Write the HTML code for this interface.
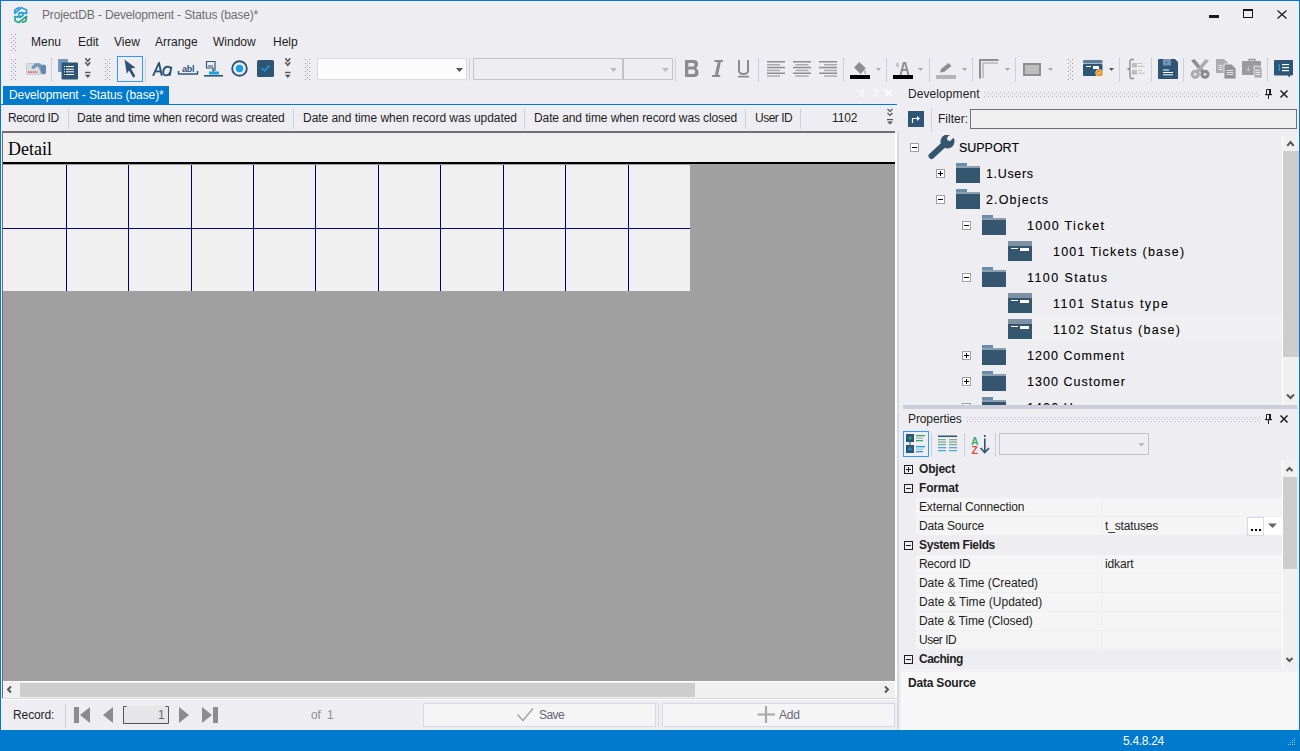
<!DOCTYPE html>
<html><head><meta charset="utf-8"><style>
*{box-sizing:border-box;margin:0;padding:0}
html,body{width:1300px;height:751px;overflow:hidden;background:#EEEEF2;font-family:"Liberation Sans",sans-serif;font-size:12px;color:#1E1E1E}
.a{position:absolute}
#root{position:relative;width:1300px;height:751px;overflow:hidden;background:#EEEEF2}
.t{position:absolute;white-space:pre;line-height:14px}
.tr{position:absolute;white-space:pre;line-height:14px;font-size:12.5px;color:#000;-webkit-text-stroke:0.1px #000}
.b{font-weight:bold}
</style></head><body><div id="root">
<svg class="a" style="left:0;top:0" width="1300" height="100" viewBox="0 0 1300 100" shape-rendering="auto">
<defs>
<pattern id="gp" x="0" y="0" width="4" height="4" patternUnits="userSpaceOnUse"><rect x="0" y="0" width="1" height="1" fill="#9A9A9A"/><rect x="2" y="2" width="1" height="1" fill="#9A9A9A"/></pattern>
<pattern id="gp2" x="1" y="1" width="4" height="4" patternUnits="userSpaceOnUse"><rect x="0" y="0" width="1" height="1" fill="#9A9A9A"/><rect x="2" y="2" width="1" height="1" fill="#9A9A9A"/></pattern>
</defs>
<!-- app icon -->
<g fill="none" stroke-width="1.7" stroke-linejoin="round" stroke-linecap="round">
<path d="M14.8 13.3 L14.8 9.9 L19.2 7.6 M14.8 13.3 L21.6 7.7 L26.6 10 L26.6 13.3 L21 12.6" stroke="#2A9FDB"/>
<path d="M18.8 13.4 L21 12.5 L22.9 13.7 L22.9 15.6 L20.9 16.8 L18.8 15.8 Z" stroke="#25A3BE"/>
<path d="M14.6 16.6 L20.5 17.2" stroke="#25A3BE"/>
<path d="M14.8 16.8 L15.3 20.9 L18.8 22.5 L26.4 16.5" stroke="#28A79A"/>
<path d="M22.4 22.3 L25.8 21.2 L26.4 16.6" stroke="#2EA36E"/>
</g>
<!-- title buttons -->
<rect x="1209" y="15" width="10" height="3" fill="#1A1A1A"/>
<rect x="1243.5" y="9.5" width="9" height="8" fill="none" stroke="#1A1A1A" stroke-width="1"/>
<rect x="1243" y="9" width="10" height="2" fill="#1A1A1A"/>
<path d="M1277.5 10.5 L1286.5 18.5 M1286.5 10.5 L1277.5 18.5" stroke="#1A1A1A" stroke-width="1.2"/>
<!-- grips -->
<rect x="11" y="34" width="1" height="1" fill="#999999"/><rect x="15" y="34" width="1" height="1" fill="#999999"/><rect x="13" y="36" width="1" height="1" fill="#999999"/><rect x="11" y="38" width="1" height="1" fill="#999999"/><rect x="15" y="38" width="1" height="1" fill="#999999"/><rect x="13" y="40" width="1" height="1" fill="#999999"/><rect x="11" y="42" width="1" height="1" fill="#999999"/><rect x="15" y="42" width="1" height="1" fill="#999999"/><rect x="13" y="44" width="1" height="1" fill="#999999"/><rect x="11" y="46" width="1" height="1" fill="#999999"/><rect x="15" y="46" width="1" height="1" fill="#999999"/><rect x="13" y="48" width="1" height="1" fill="#999999"/><rect x="11" y="50" width="1" height="1" fill="#999999"/><rect x="15" y="50" width="1" height="1" fill="#999999"/>
<rect x="11" y="59" width="1" height="1" fill="#999999"/><rect x="15" y="59" width="1" height="1" fill="#999999"/><rect x="13" y="61" width="1" height="1" fill="#999999"/><rect x="11" y="63" width="1" height="1" fill="#999999"/><rect x="15" y="63" width="1" height="1" fill="#999999"/><rect x="13" y="65" width="1" height="1" fill="#999999"/><rect x="11" y="67" width="1" height="1" fill="#999999"/><rect x="15" y="67" width="1" height="1" fill="#999999"/><rect x="13" y="69" width="1" height="1" fill="#999999"/><rect x="11" y="71" width="1" height="1" fill="#999999"/><rect x="15" y="71" width="1" height="1" fill="#999999"/><rect x="13" y="73" width="1" height="1" fill="#999999"/><rect x="11" y="75" width="1" height="1" fill="#999999"/><rect x="15" y="75" width="1" height="1" fill="#999999"/><rect x="13" y="77" width="1" height="1" fill="#999999"/><rect x="11" y="79" width="1" height="1" fill="#999999"/><rect x="15" y="79" width="1" height="1" fill="#999999"/>
<rect x="105" y="59" width="1" height="1" fill="#999999"/><rect x="109" y="59" width="1" height="1" fill="#999999"/><rect x="107" y="61" width="1" height="1" fill="#999999"/><rect x="105" y="63" width="1" height="1" fill="#999999"/><rect x="109" y="63" width="1" height="1" fill="#999999"/><rect x="107" y="65" width="1" height="1" fill="#999999"/><rect x="105" y="67" width="1" height="1" fill="#999999"/><rect x="109" y="67" width="1" height="1" fill="#999999"/><rect x="107" y="69" width="1" height="1" fill="#999999"/><rect x="105" y="71" width="1" height="1" fill="#999999"/><rect x="109" y="71" width="1" height="1" fill="#999999"/><rect x="107" y="73" width="1" height="1" fill="#999999"/><rect x="105" y="75" width="1" height="1" fill="#999999"/><rect x="109" y="75" width="1" height="1" fill="#999999"/><rect x="107" y="77" width="1" height="1" fill="#999999"/><rect x="105" y="79" width="1" height="1" fill="#999999"/><rect x="109" y="79" width="1" height="1" fill="#999999"/>
<rect x="305" y="59" width="1" height="1" fill="#999999"/><rect x="309" y="59" width="1" height="1" fill="#999999"/><rect x="307" y="61" width="1" height="1" fill="#999999"/><rect x="305" y="63" width="1" height="1" fill="#999999"/><rect x="309" y="63" width="1" height="1" fill="#999999"/><rect x="307" y="65" width="1" height="1" fill="#999999"/><rect x="305" y="67" width="1" height="1" fill="#999999"/><rect x="309" y="67" width="1" height="1" fill="#999999"/><rect x="307" y="69" width="1" height="1" fill="#999999"/><rect x="305" y="71" width="1" height="1" fill="#999999"/><rect x="309" y="71" width="1" height="1" fill="#999999"/><rect x="307" y="73" width="1" height="1" fill="#999999"/><rect x="305" y="75" width="1" height="1" fill="#999999"/><rect x="309" y="75" width="1" height="1" fill="#999999"/><rect x="307" y="77" width="1" height="1" fill="#999999"/><rect x="305" y="79" width="1" height="1" fill="#999999"/><rect x="309" y="79" width="1" height="1" fill="#999999"/>
<rect x="1068" y="59" width="1" height="1" fill="#999999"/><rect x="1072" y="59" width="1" height="1" fill="#999999"/><rect x="1070" y="61" width="1" height="1" fill="#999999"/><rect x="1068" y="63" width="1" height="1" fill="#999999"/><rect x="1072" y="63" width="1" height="1" fill="#999999"/><rect x="1070" y="65" width="1" height="1" fill="#999999"/><rect x="1068" y="67" width="1" height="1" fill="#999999"/><rect x="1072" y="67" width="1" height="1" fill="#999999"/><rect x="1070" y="69" width="1" height="1" fill="#999999"/><rect x="1068" y="71" width="1" height="1" fill="#999999"/><rect x="1072" y="71" width="1" height="1" fill="#999999"/><rect x="1070" y="73" width="1" height="1" fill="#999999"/><rect x="1068" y="75" width="1" height="1" fill="#999999"/><rect x="1072" y="75" width="1" height="1" fill="#999999"/><rect x="1070" y="77" width="1" height="1" fill="#999999"/><rect x="1068" y="79" width="1" height="1" fill="#999999"/><rect x="1072" y="79" width="1" height="1" fill="#999999"/>
<!-- separators -->
<g fill="#CCCEDB">
<rect x="51" y="58" width="1" height="24"/>
<rect x="145" y="58" width="1" height="24"/>
<rect x="675" y="58" width="1" height="24"/>
<rect x="469" y="58" width="1" height="23"/>
<rect x="758" y="58" width="1" height="24"/>
<rect x="843" y="58" width="1" height="24"/>
<rect x="886" y="58" width="1" height="24"/>
<rect x="929" y="58" width="1" height="24"/>
<rect x="972" y="58" width="1" height="24"/>
<rect x="1015" y="58" width="1" height="24"/>
<rect x="1119" y="58" width="1" height="24"/>
<rect x="1151" y="58" width="1" height="24"/>
<rect x="1183" y="58" width="1" height="24"/>
<rect x="1267" y="58" width="1" height="24"/>
</g>
<!-- card+hand icon -->
<rect x="26.5" y="63.5" width="14.5" height="11" rx="0.8" fill="#D9DCE1" stroke="#C8CCD2"/>
<g fill="#E2463F"><rect x="28" y="71.3" width="1.4" height="1.6"/><rect x="30.4" y="71.3" width="1.4" height="1.6"/><rect x="32.8" y="71.3" width="1.4" height="1.6"/><rect x="35.2" y="71.3" width="1.4" height="1.6"/></g>
<path d="M33.3 67.3 L36.6 64.6 L39.6 65.3 L42.5 71.5" fill="none" stroke="#7397B8" stroke-width="3.4" stroke-linecap="round" stroke-linejoin="round"/>
<rect x="41" y="64.8" width="5" height="9.4" rx="1.6" fill="#6288AC"/>
<!-- doc list icon -->
<rect x="58" y="59" width="10" height="13" rx="1" fill="#7396B8"/>
<rect x="61.5" y="62.5" width="16.5" height="17" rx="1" fill="#2F5575" stroke="#EEEEF2" stroke-width="0"/>
<g fill="#FFFFFF"><rect x="66" y="66" width="8" height="1"/><rect x="66" y="68.7" width="8" height="1"/><rect x="66" y="71.3" width="8" height="1"/><rect x="66" y="74" width="8" height="1"/>
<rect x="64" y="66" width="1" height="1"/><rect x="64" y="68.7" width="1" height="1"/><rect x="64" y="71.3" width="1" height="1"/><rect x="64" y="74" width="1" height="1"/></g>
<!-- chevrons -->
<path d="M85.3 58.3 L87.75 61.3 L90.2 58.3 M85.3 62.3 L87.75 65.3 L90.2 62.3" fill="none" stroke="#555" stroke-width="1.5"/>
<rect x="85" y="71.8" width="5.5" height="1.3" fill="#555"/><path d="M85 74.8 L90.5 74.8 L87.75 78 Z" fill="#555"/>
<path d="M285.3 58.3 L287.75 61.3 L290.2 58.3 M285.3 62.3 L287.75 65.3 L290.2 62.3" fill="none" stroke="#555" stroke-width="1.5"/>
<rect x="285" y="71.8" width="5.5" height="1.3" fill="#555"/><path d="M285 74.8 L290.5 74.8 L287.75 78 Z" fill="#555"/>
<!-- selected arrow -->
<rect x="117.5" y="56.5" width="25" height="25" fill="none" stroke="#3399FF"/>
<path d="M124.5 59.5 L135.5 67.8 L131 68.6 L135.3 76 L133.3 77.8 L129 70.5 L126.8 73.7 Z" fill="#2F5575"/>
<!-- Aa -->
<g fill="none" stroke="#2F5575" stroke-width="1.9" stroke-linejoin="round">
<path d="M153 75.8 L159 62.8 L161.8 75.8"/><path d="M155.6 71.4 L161.2 71.4"/>
<path d="M171.4 66.6 L169.7 75.8"/><path d="M170.9 68.3 Q169.8 66.7 167.6 66.7 Q163.8 66.7 163.3 71.6 Q163 75.4 166.1 75.4 Q169 75.4 170.3 72.2"/>
</g>
<!-- abl -->
<text x="182" y="72" font-family="Liberation Sans" font-weight="bold" font-size="9" fill="#2F5575" letter-spacing="-0.3">abl</text>
<path d="M178.5 71 L178.5 74 L197.5 74 L197.5 71" fill="none" stroke="#2F5575" stroke-width="1.5"/>
<!-- label icon -->
<path d="M206.5 61.5 L215 61.5 L215 70 L213 71 L213 68 L206.5 68 Z" fill="none" stroke="#2F5575" stroke-width="1.2"/>
<rect x="208" y="65.5" width="5" height="1" fill="#2F5575"/>
<rect x="209" y="71.5" width="10" height="3" fill="#1BA1E2"/>
<rect x="204" y="75" width="19" height="1.6" fill="#2F5575"/>
<!-- radio -->
<circle cx="239.5" cy="68.5" r="7.3" fill="none" stroke="#2F5575" stroke-width="1.9"/>
<circle cx="239.5" cy="68.5" r="3.8" fill="#1BA1E2"/>
<!-- checkbox -->
<rect x="257" y="60" width="17" height="17" rx="1.6" fill="#2F5575"/>
<path d="M261.5 68 L264.5 71 L269.5 65.5" fill="none" stroke="#1BA1E2" stroke-width="1.4"/>
<!-- combos -->
<rect x="317.5" y="58.5" width="149" height="21" fill="#FCFCFC" stroke="#D6DAE4"/>
<path d="M456 68 L463 68 L459.5 72 Z" fill="#555"/>
<rect x="473.5" y="58.5" width="149" height="21" fill="none" stroke="#C4C4C4"/>
<path d="M610 68 L617 68 L613.5 72 Z" fill="#BBBBBB"/>
<rect x="623.5" y="58.5" width="49" height="21" fill="none" stroke="#C4C4C4"/>
<path d="M662 68 L669 68 L665.5 72 Z" fill="#BBBBBB"/>
<!-- B I U -->
<path fill-rule="evenodd" fill="#8C8C8C" d="M685 60 L694 60 Q698 60 698 64 Q698 66.8 696.2 68.2 Q698.6 69.6 698.6 72.6 Q698.6 77 694 77 L685 77 Z M688.3 63 L692.8 63 Q694.6 63 694.6 64.8 Q694.6 66.6 692.8 66.6 L688.3 66.6 Z M688.3 69.4 L693.2 69.4 Q695.2 69.4 695.2 71.7 Q695.2 74 693.2 74 L688.3 74 Z"/>
<path fill="#8C8C8C" d="M714.6 60 L723.2 60 L722.8 62 L720.9 62 L718.1 75 L720.4 75 L720 77 L711.8 77 L712.2 75 L714.9 75 L717.7 62 L714.2 62 Z"/>
<path d="M739 60 L739 70.3 Q739 74 743.5 74 Q748 74 748 70.3 L748 60" fill="none" stroke="#8C8C8C" stroke-width="2"/>
<rect x="738" y="75.8" width="11" height="1.7" fill="#8C8C8C"/>
<!-- align -->
<g fill="#8E8E8E">
<rect x="767" y="61" width="18" height="1.5"/><rect x="767" y="66.8" width="18" height="1.5"/><rect x="767" y="72.5" width="18" height="1.5"/>
<rect x="793" y="61" width="18" height="1.5"/><rect x="793" y="66.8" width="18" height="1.5"/><rect x="793" y="72.5" width="18" height="1.5"/>
<rect x="819" y="61" width="18" height="1.5"/><rect x="819" y="66.8" width="18" height="1.5"/><rect x="819" y="72.5" width="18" height="1.5"/>
</g>
<g fill="#AAAAAA">
<rect x="767" y="64" width="13" height="1.5"/><rect x="767" y="69.7" width="13" height="1.5"/><rect x="767" y="75.3" width="13" height="1.5"/>
<rect x="795.5" y="64" width="13" height="1.5"/><rect x="795.5" y="69.7" width="13" height="1.5"/><rect x="795.5" y="75.3" width="13" height="1.5"/>
<rect x="824" y="64" width="13" height="1.5"/><rect x="824" y="69.7" width="13" height="1.5"/><rect x="824" y="75.3" width="13" height="1.5"/>
</g>
<!-- fill color -->
<path d="M859.3 62 L866 68.5 L860.5 74 L854 67.5 Z" fill="#8E8E8E"/>
<path d="M864 68 L866.2 71.5 L866.2 74 L864 74 Z" fill="#C4C4C4"/>
<rect x="850" y="75" width="20" height="4" fill="#000"/>
<path d="M876 68 L881 68 L878.5 71 Z" fill="#AAAAAA"/>
<!-- font color -->
<path d="M899.5 75 L903 62 L906 62 L909.5 75 L907.5 75 L906.4 71 L902.6 71 L901.5 75 Z M903.1 69 L905.9 69 L904.5 64 Z" fill="#8E8E8E" fill-rule="evenodd"/>
<ellipse cx="897.5" cy="65" rx="1.5" ry="2.5" fill="#C4C4C4"/>
<rect x="893" y="75" width="20" height="4" fill="#000"/>
<path d="M918 68 L923 68 L920.5 71 Z" fill="#AAAAAA"/>
<!-- pen -->
<path d="M940 72.5 L941 69 L948.5 63 L951.5 66 L944 72 Z" fill="#8E8E8E"/>
<rect x="936" y="75" width="20" height="4" fill="#B4B4B4"/>
<path d="M962 68 L967 68 L964.5 71 Z" fill="#AAAAAA"/>
<!-- border -->
<path d="M980 78.5 L980 60 L998.5 60" fill="none" stroke="#8E8E8E" stroke-width="2"/>
<path d="M983 78 L983 63 L998 63" fill="none" stroke="#C4C4C4" stroke-width="2"/>
<path d="M1005 68 L1010 68 L1007.5 71 Z" fill="#AAAAAA"/>
<!-- rect -->
<rect x="1024" y="64" width="16" height="11" fill="#BEBEBE" stroke="#8E8E8E" stroke-width="2"/>
<path d="M1048 68 L1053 68 L1050.5 71 Z" fill="#AAAAAA"/>
<!-- form icon -->
<rect x="1083" y="60" width="19.5" height="3.5" rx="1" fill="#5C7F9E"/>
<rect x="1083" y="64" width="19.5" height="12" rx="1" fill="#2F5575"/>
<rect x="1086" y="66" width="5" height="1" fill="#fff"/>
<rect x="1093" y="66" width="6" height="3" fill="#fff"/>
<circle cx="1099.2" cy="73" r="3.6" fill="#F29111" stroke="#EEEEF2" stroke-width="0.6"/>
<path d="M1097.5 74 L1100.5 72" stroke="#fff" stroke-width="1"/>
<path d="M1109 68 L1114 68 L1111.5 71 Z" fill="#555"/>
<!-- brace icon -->
<path d="M1134 59.5 L1131 59.5 L1130 61 L1130 68 L1128 69 L1130 70 L1130 77 L1131 78.5 L1134 78.5" fill="none" stroke="#8E8E8E" stroke-width="1.4"/>
<rect x="1132" y="63" width="5" height="4.5" fill="#BDBDBD"/>
<rect x="1132" y="70" width="5" height="4.5" fill="#BDBDBD"/>
<g fill="#BDBDBD"><rect x="1138" y="63" width="4" height="0.9"/><rect x="1138" y="65.8" width="7" height="0.9"/><rect x="1138" y="70" width="4" height="0.9"/><rect x="1138" y="72.8" width="7" height="0.9"/></g>
<!-- save -->
<path d="M1159 59 L1175 59 L1178 62 L1178 79 L1159 79 Q1158 79 1158 78 L1158 60 Q1158 59 1159 59 Z" fill="#2F5575"/>
<rect x="1163" y="59" width="8" height="6.5" fill="#7396B8"/>
<rect x="1165.5" y="62" width="2" height="1" fill="#2F5575"/>
<g fill="#fff"><rect x="1163" y="69.5" width="6" height="1"/><rect x="1163" y="72" width="10" height="1"/><rect x="1163" y="74.3" width="10" height="1"/></g>
<!-- scissors -->
<path d="M1191 60.5 L1194.5 59 L1204 70.5 L1201.5 73 Z" fill="#8C8C8C"/>
<path d="M1209 60.5 L1205.5 59 L1196 70.5 L1198.5 73 Z" fill="#ACACAC"/>
<circle cx="1195.2" cy="74.3" r="4.6" fill="#ACACAC"/><circle cx="1205" cy="74.3" r="4.6" fill="#8C8C8C"/>
<circle cx="1195.2" cy="74.3" r="1.4" fill="#EEEEF2"/><circle cx="1205" cy="74.3" r="1.4" fill="#EEEEF2"/>
<circle cx="1200" cy="69" r="0.8" fill="#BDBDBD"/>
<!-- copy -->
<path d="M1216 59 L1224 59 L1228 63 L1228 73 L1216 73 Z" fill="#ADADAD"/>
<g fill="#EEEEF2"><rect x="1218.5" y="65" width="4" height="0.9"/><rect x="1218.5" y="67" width="4" height="0.9"/><rect x="1218.5" y="69" width="4" height="0.9"/></g>
<path d="M1224 64 L1231.5 64 L1236 68.5 L1236 79 L1224 79 Z" fill="#949494" stroke="#EEEEF2" stroke-width="0.8"/>
<g fill="#EEEEF2"><rect x="1226.5" y="70" width="7" height="0.9"/><rect x="1226.5" y="72" width="7" height="0.9"/><rect x="1226.5" y="74" width="7" height="0.9"/></g>
<!-- paste -->
<rect x="1242" y="61" width="19" height="14" rx="1" fill="#9A9A9A"/>
<path d="M1249 61 L1249 59.5 L1255 59.5 L1255 61" fill="none" stroke="#9A9A9A" stroke-width="1.3"/>
<path d="M1248.3 66 L1248.3 71 M1246.3 69 L1248.3 71.3 L1250.3 69" fill="none" stroke="#D0D0D0" stroke-width="0.8"/>
<path d="M1254 66 L1260 66 L1262 68 L1262 78 L1254 78 Z" fill="#ABABAB" stroke="#EEEEF2" stroke-width="0.8"/>
<g fill="#EEEEF2"><rect x="1255.5" y="70" width="4.5" height="0.9"/><rect x="1255.5" y="72" width="4.5" height="0.9"/><rect x="1255.5" y="74" width="4.5" height="0.9"/></g>
<!-- comment -->
<path d="M1275 60 L1292 60 Q1293 60 1293 61 L1293 74.5 Q1293 75.5 1292 75.5 L1290 75.5 L1289.5 77.5 L1287.5 75.5 L1275 75.5 Q1274 75.5 1274 74.5 L1274 61 Q1274 60 1275 60 Z" fill="#2F5575"/>
<rect x="1278.8" y="64.5" width="1.2" height="6.5" fill="#1BA1E2"/>
<rect x="1278" y="64.8" width="1" height="1" fill="#1BA1E2"/>
<g fill="#fff"><rect x="1282" y="64" width="7" height="1.2"/><rect x="1282" y="67" width="7" height="1.2"/><rect x="1282" y="70" width="7" height="1.2"/></g>
</svg>

<div class="a" style="left:0px;top:0px;width:1300px;height:1px;background:#0A74D0;"></div>
<div class="a" style="left:0px;top:0px;width:1px;height:751px;background:#0A74D0;"></div>
<div class="a" style="left:1299px;top:0px;width:1px;height:751px;background:#0A74D0;"></div>
<div class="t" style="left:42px;top:8px;color:#6D6D6D;letter-spacing:-0.15px">ProjectDB - Development - Status (base)*</div>
<div class="t" style="left:31px;top:35px;">Menu</div>
<div class="t" style="left:78px;top:35px;">Edit</div>
<div class="t" style="left:114px;top:35px;">View</div>
<div class="t" style="left:155px;top:35px;">Arrange</div>
<div class="t" style="left:213px;top:35px;">Window</div>
<div class="t" style="left:273px;top:35px;">Help</div>
<div class="a" style="left:3px;top:86px;width:166px;height:18px;background:#007ACC;"></div>
<div class="t" style="left:9px;top:88px;color:#fff;letter-spacing:-0.1px">Development - Status (base)*</div>
<div class="a" style="left:1px;top:104px;width:896px;height:1px;background:#007ACC;"></div>
<svg class="a" style="left:855px;top:85px" width="42" height="16"><path d="M8 4 L4 8 L8 12 Z" fill="none" stroke="#FFFFFF"/><path d="M20 4 L24 8 L20 12 Z" fill="none" stroke="#FFFFFF"/><path d="M30 4.5 L37 11.5 M37 4.5 L30 11.5" stroke="#FFFFFF" stroke-width="1.5"/></svg>
<div class="t" style="left:8px;top:111px;letter-spacing:-0.37px">Record ID</div>
<div class="t" style="left:77px;top:111px;letter-spacing:-0.12px">Date and time when record was created</div>
<div class="t" style="left:303px;top:111px;letter-spacing:-0.04px">Date and time when record was updated</div>
<div class="t" style="left:534px;top:111px;letter-spacing:-0.1px">Date and time when record was closed</div>
<div class="t" style="left:755px;top:111px;letter-spacing:-0.5px">User ID</div>
<div class="t" style="left:832px;top:111px;letter-spacing:-0.12px">1102</div>
<div class="a" style="left:68px;top:109px;width:1px;height:20px;background:#CCCEDB;"></div>
<div class="a" style="left:293px;top:109px;width:1px;height:20px;background:#CCCEDB;"></div>
<div class="a" style="left:524px;top:109px;width:1px;height:20px;background:#CCCEDB;"></div>
<div class="a" style="left:745px;top:109px;width:1px;height:20px;background:#CCCEDB;"></div>
<div class="a" style="left:800px;top:109px;width:1px;height:20px;background:#CCCEDB;"></div>
<svg class="a" style="left:885px;top:107px" width="10" height="20"><g fill="none" stroke="#555" stroke-width="1.2"><path d="M2.5 2 L5 4.5 L7.5 2 M2.5 6 L5 8.5 L7.5 6"/></g><rect x="2" y="12" width="6" height="1.2" fill="#555"/><path d="M2 14.5 L8 14.5 L5 17.5 Z" fill="#555"/></svg>
<div class="a" style="left:2px;top:131px;width:893px;height:2px;background:#707070;"></div>
<div class="a" style="left:2px;top:131px;width:1px;height:567px;background:#707070;"></div>
<div class="a" style="left:3px;top:133px;width:892px;height:29px;background:#F0F0F0;"></div>
<div class="a" style="left:895px;top:131px;width:2px;height:567px;background:#FFFFFF;"></div>
<div class="a" style="left:897px;top:131px;width:2px;height:599px;background:#D8DAE4;"></div>
<div class="t" style="left:8px;top:139px;font-family:'Liberation Serif',serif;font-size:18px;color:#000;line-height:20px">Detail</div>
<div class="a" style="left:3px;top:162px;width:892px;height:2px;background:#000;"></div>
<div class="a" style="left:3px;top:164px;width:892px;height:517px;background:#A0A0A0;"></div>
<div class="a" style="left:3px;top:165px;width:687px;height:126px;background:#F0F0F0;"></div>
<svg class="a" style="left:0;top:0" width="900" height="300"><rect x="66" y="165" width="1" height="126" fill="#000080"/><rect x="128" y="165" width="1" height="126" fill="#000080"/><rect x="191" y="165" width="1" height="126" fill="#000080"/><rect x="253" y="165" width="1" height="126" fill="#000080"/><rect x="315" y="165" width="1" height="126" fill="#000080"/><rect x="378" y="165" width="1" height="126" fill="#000080"/><rect x="440" y="165" width="1" height="126" fill="#000080"/><rect x="503" y="165" width="1" height="126" fill="#000080"/><rect x="565" y="165" width="1" height="126" fill="#000080"/><rect x="628" y="165" width="1" height="126" fill="#000080"/><rect x="3" y="228" width="687" height="1" fill="#000080"/></svg>
<div class="a" style="left:3px;top:681px;width:892px;height:1px;background:#FFFFFF;"></div>
<div class="a" style="left:3px;top:682px;width:892px;height:16px;background:#F0F0F0;"></div>
<div class="a" style="left:20px;top:683px;width:675px;height:14px;background:#CDCDCD;"></div>
<svg class="a" style="left:0;top:680px" width="900" height="18"><path d="M11 6.5 L8 9.5 L11 12.5" fill="none" stroke="#555" stroke-width="2"/><path d="M885 6.5 L888 9.5 L885 12.5" fill="none" stroke="#555" stroke-width="2"/></svg>
<div class="a" style="left:1px;top:698px;width:896px;height:1px;background:#D8D8DC;"></div>
<div class="a" style="left:1px;top:699px;width:896px;height:1px;background:#FFFFFF;"></div>
<div class="t" style="left:13px;top:708px;letter-spacing:-0.1px">Record:</div>
<div class="a" style="left:65px;top:704px;width:1px;height:24px;background:#CCCEDB;"></div>
<svg class="a" style="left:60px;top:700px" width="170" height="30">
<g fill="#8C8C8C">
<rect x="14" y="7" width="5" height="16"/><path d="M30 7 L30 23 L20 15 Z"/>
<path d="M53 7 L53 23 L43 15 Z"/>
<path d="M119 7 L119 23 L129 15 Z"/>
<path d="M142 7 L142 23 L152 15 Z"/><rect x="153" y="7" width="5" height="16"/>
</g>
<rect x="63" y="6" width="46" height="18" fill="#E6E6E8"/>
<path d="M66.5 6.5 L63.5 6.5 L63.5 23.5 L108.5 23.5 L108.5 6.5 L105.5 6.5" fill="none" stroke="#555" stroke-width="1"/>
</svg>
<div class="t" style="left:158px;top:708px;color:#666">1</div>
<div class="t" style="left:311px;top:708px;color:#8E8E8E;letter-spacing:-0.2px">of  1</div>
<div class="a" style="left:423px;top:703px;width:233px;height:24px;background:#F5F5F5;border:1px solid #D5D9E3"></div>
<div class="a" style="left:658px;top:703px;width:1px;height:24px;background:#D5D9E3;"></div>
<div class="a" style="left:662px;top:703px;width:233px;height:24px;background:#F5F5F5;border:1px solid #D5D9E3"></div>
<svg class="a" style="left:500px;top:700px" width="300" height="28">
<path d="M17.5 14.5 L23 20.5 L33 8.5" fill="none" stroke="#A8A8A8" stroke-width="1.6"/>
<path d="M266 6 L266 23 M257.5 14.5 L275 14.5" stroke="#A8A8A8" stroke-width="2.2"/>
</svg>
<div class="t" style="left:539px;top:708px;color:#666677;letter-spacing:-0.6px">Save</div>
<div class="t" style="left:779px;top:708px;color:#666677;letter-spacing:-0.2px">Add</div>
<div class="a" style="left:0px;top:730px;width:1300px;height:21px;background:#007ACC;"></div>
<div class="t" style="left:1123px;top:734px;color:#fff;letter-spacing:-0.3px">5.4.8.24</div>
<svg class="a" style="left:1284px;top:736px" width="14" height="14"><rect x="10" y="2" width="1" height="1" fill="#8FC3EA"/><rect x="8" y="4" width="1" height="1" fill="#8FC3EA"/><rect x="10" y="4" width="1" height="1" fill="#8FC3EA"/><rect x="6" y="6" width="1" height="1" fill="#8FC3EA"/><rect x="8" y="6" width="1" height="1" fill="#8FC3EA"/><rect x="10" y="6" width="1" height="1" fill="#8FC3EA"/><rect x="4" y="8" width="1" height="1" fill="#8FC3EA"/><rect x="6" y="8" width="1" height="1" fill="#8FC3EA"/><rect x="8" y="8" width="1" height="1" fill="#8FC3EA"/><rect x="10" y="8" width="1" height="1" fill="#8FC3EA"/></svg>
<div class="t" style="left:908px;top:87px;letter-spacing:0.08px">Development</div>
<svg class="a" style="left:0;top:0" width="1300" height="751"><rect x="984" y="92" width="1" height="1" fill="#B8B8C0"/><rect x="988" y="92" width="1" height="1" fill="#B8B8C0"/><rect x="992" y="92" width="1" height="1" fill="#B8B8C0"/><rect x="996" y="92" width="1" height="1" fill="#B8B8C0"/><rect x="1000" y="92" width="1" height="1" fill="#B8B8C0"/><rect x="1004" y="92" width="1" height="1" fill="#B8B8C0"/><rect x="1008" y="92" width="1" height="1" fill="#B8B8C0"/><rect x="1012" y="92" width="1" height="1" fill="#B8B8C0"/><rect x="1016" y="92" width="1" height="1" fill="#B8B8C0"/><rect x="1020" y="92" width="1" height="1" fill="#B8B8C0"/><rect x="1024" y="92" width="1" height="1" fill="#B8B8C0"/><rect x="1028" y="92" width="1" height="1" fill="#B8B8C0"/><rect x="1032" y="92" width="1" height="1" fill="#B8B8C0"/><rect x="1036" y="92" width="1" height="1" fill="#B8B8C0"/><rect x="1040" y="92" width="1" height="1" fill="#B8B8C0"/><rect x="1044" y="92" width="1" height="1" fill="#B8B8C0"/><rect x="1048" y="92" width="1" height="1" fill="#B8B8C0"/><rect x="1052" y="92" width="1" height="1" fill="#B8B8C0"/><rect x="1056" y="92" width="1" height="1" fill="#B8B8C0"/><rect x="1060" y="92" width="1" height="1" fill="#B8B8C0"/><rect x="1064" y="92" width="1" height="1" fill="#B8B8C0"/><rect x="1068" y="92" width="1" height="1" fill="#B8B8C0"/><rect x="1072" y="92" width="1" height="1" fill="#B8B8C0"/><rect x="1076" y="92" width="1" height="1" fill="#B8B8C0"/><rect x="1080" y="92" width="1" height="1" fill="#B8B8C0"/><rect x="1084" y="92" width="1" height="1" fill="#B8B8C0"/><rect x="1088" y="92" width="1" height="1" fill="#B8B8C0"/><rect x="1092" y="92" width="1" height="1" fill="#B8B8C0"/><rect x="1096" y="92" width="1" height="1" fill="#B8B8C0"/><rect x="1100" y="92" width="1" height="1" fill="#B8B8C0"/><rect x="1104" y="92" width="1" height="1" fill="#B8B8C0"/><rect x="1108" y="92" width="1" height="1" fill="#B8B8C0"/><rect x="1112" y="92" width="1" height="1" fill="#B8B8C0"/><rect x="1116" y="92" width="1" height="1" fill="#B8B8C0"/><rect x="1120" y="92" width="1" height="1" fill="#B8B8C0"/><rect x="1124" y="92" width="1" height="1" fill="#B8B8C0"/><rect x="1128" y="92" width="1" height="1" fill="#B8B8C0"/><rect x="1132" y="92" width="1" height="1" fill="#B8B8C0"/><rect x="1136" y="92" width="1" height="1" fill="#B8B8C0"/><rect x="1140" y="92" width="1" height="1" fill="#B8B8C0"/><rect x="1144" y="92" width="1" height="1" fill="#B8B8C0"/><rect x="1148" y="92" width="1" height="1" fill="#B8B8C0"/><rect x="1152" y="92" width="1" height="1" fill="#B8B8C0"/><rect x="1156" y="92" width="1" height="1" fill="#B8B8C0"/><rect x="1160" y="92" width="1" height="1" fill="#B8B8C0"/><rect x="1164" y="92" width="1" height="1" fill="#B8B8C0"/><rect x="1168" y="92" width="1" height="1" fill="#B8B8C0"/><rect x="1172" y="92" width="1" height="1" fill="#B8B8C0"/><rect x="1176" y="92" width="1" height="1" fill="#B8B8C0"/><rect x="1180" y="92" width="1" height="1" fill="#B8B8C0"/><rect x="1184" y="92" width="1" height="1" fill="#B8B8C0"/><rect x="1188" y="92" width="1" height="1" fill="#B8B8C0"/><rect x="1192" y="92" width="1" height="1" fill="#B8B8C0"/><rect x="1196" y="92" width="1" height="1" fill="#B8B8C0"/><rect x="1200" y="92" width="1" height="1" fill="#B8B8C0"/><rect x="1204" y="92" width="1" height="1" fill="#B8B8C0"/><rect x="1208" y="92" width="1" height="1" fill="#B8B8C0"/><rect x="1212" y="92" width="1" height="1" fill="#B8B8C0"/><rect x="1216" y="92" width="1" height="1" fill="#B8B8C0"/><rect x="1220" y="92" width="1" height="1" fill="#B8B8C0"/><rect x="1224" y="92" width="1" height="1" fill="#B8B8C0"/><rect x="1228" y="92" width="1" height="1" fill="#B8B8C0"/><rect x="1232" y="92" width="1" height="1" fill="#B8B8C0"/><rect x="1236" y="92" width="1" height="1" fill="#B8B8C0"/><rect x="1240" y="92" width="1" height="1" fill="#B8B8C0"/><rect x="1244" y="92" width="1" height="1" fill="#B8B8C0"/><rect x="1248" y="92" width="1" height="1" fill="#B8B8C0"/><rect x="1252" y="92" width="1" height="1" fill="#B8B8C0"/><rect x="1256" y="92" width="1" height="1" fill="#B8B8C0"/><rect x="986" y="94" width="1" height="1" fill="#B8B8C0"/><rect x="990" y="94" width="1" height="1" fill="#B8B8C0"/><rect x="994" y="94" width="1" height="1" fill="#B8B8C0"/><rect x="998" y="94" width="1" height="1" fill="#B8B8C0"/><rect x="1002" y="94" width="1" height="1" fill="#B8B8C0"/><rect x="1006" y="94" width="1" height="1" fill="#B8B8C0"/><rect x="1010" y="94" width="1" height="1" fill="#B8B8C0"/><rect x="1014" y="94" width="1" height="1" fill="#B8B8C0"/><rect x="1018" y="94" width="1" height="1" fill="#B8B8C0"/><rect x="1022" y="94" width="1" height="1" fill="#B8B8C0"/><rect x="1026" y="94" width="1" height="1" fill="#B8B8C0"/><rect x="1030" y="94" width="1" height="1" fill="#B8B8C0"/><rect x="1034" y="94" width="1" height="1" fill="#B8B8C0"/><rect x="1038" y="94" width="1" height="1" fill="#B8B8C0"/><rect x="1042" y="94" width="1" height="1" fill="#B8B8C0"/><rect x="1046" y="94" width="1" height="1" fill="#B8B8C0"/><rect x="1050" y="94" width="1" height="1" fill="#B8B8C0"/><rect x="1054" y="94" width="1" height="1" fill="#B8B8C0"/><rect x="1058" y="94" width="1" height="1" fill="#B8B8C0"/><rect x="1062" y="94" width="1" height="1" fill="#B8B8C0"/><rect x="1066" y="94" width="1" height="1" fill="#B8B8C0"/><rect x="1070" y="94" width="1" height="1" fill="#B8B8C0"/><rect x="1074" y="94" width="1" height="1" fill="#B8B8C0"/><rect x="1078" y="94" width="1" height="1" fill="#B8B8C0"/><rect x="1082" y="94" width="1" height="1" fill="#B8B8C0"/><rect x="1086" y="94" width="1" height="1" fill="#B8B8C0"/><rect x="1090" y="94" width="1" height="1" fill="#B8B8C0"/><rect x="1094" y="94" width="1" height="1" fill="#B8B8C0"/><rect x="1098" y="94" width="1" height="1" fill="#B8B8C0"/><rect x="1102" y="94" width="1" height="1" fill="#B8B8C0"/><rect x="1106" y="94" width="1" height="1" fill="#B8B8C0"/><rect x="1110" y="94" width="1" height="1" fill="#B8B8C0"/><rect x="1114" y="94" width="1" height="1" fill="#B8B8C0"/><rect x="1118" y="94" width="1" height="1" fill="#B8B8C0"/><rect x="1122" y="94" width="1" height="1" fill="#B8B8C0"/><rect x="1126" y="94" width="1" height="1" fill="#B8B8C0"/><rect x="1130" y="94" width="1" height="1" fill="#B8B8C0"/><rect x="1134" y="94" width="1" height="1" fill="#B8B8C0"/><rect x="1138" y="94" width="1" height="1" fill="#B8B8C0"/><rect x="1142" y="94" width="1" height="1" fill="#B8B8C0"/><rect x="1146" y="94" width="1" height="1" fill="#B8B8C0"/><rect x="1150" y="94" width="1" height="1" fill="#B8B8C0"/><rect x="1154" y="94" width="1" height="1" fill="#B8B8C0"/><rect x="1158" y="94" width="1" height="1" fill="#B8B8C0"/><rect x="1162" y="94" width="1" height="1" fill="#B8B8C0"/><rect x="1166" y="94" width="1" height="1" fill="#B8B8C0"/><rect x="1170" y="94" width="1" height="1" fill="#B8B8C0"/><rect x="1174" y="94" width="1" height="1" fill="#B8B8C0"/><rect x="1178" y="94" width="1" height="1" fill="#B8B8C0"/><rect x="1182" y="94" width="1" height="1" fill="#B8B8C0"/><rect x="1186" y="94" width="1" height="1" fill="#B8B8C0"/><rect x="1190" y="94" width="1" height="1" fill="#B8B8C0"/><rect x="1194" y="94" width="1" height="1" fill="#B8B8C0"/><rect x="1198" y="94" width="1" height="1" fill="#B8B8C0"/><rect x="1202" y="94" width="1" height="1" fill="#B8B8C0"/><rect x="1206" y="94" width="1" height="1" fill="#B8B8C0"/><rect x="1210" y="94" width="1" height="1" fill="#B8B8C0"/><rect x="1214" y="94" width="1" height="1" fill="#B8B8C0"/><rect x="1218" y="94" width="1" height="1" fill="#B8B8C0"/><rect x="1222" y="94" width="1" height="1" fill="#B8B8C0"/><rect x="1226" y="94" width="1" height="1" fill="#B8B8C0"/><rect x="1230" y="94" width="1" height="1" fill="#B8B8C0"/><rect x="1234" y="94" width="1" height="1" fill="#B8B8C0"/><rect x="1238" y="94" width="1" height="1" fill="#B8B8C0"/><rect x="1242" y="94" width="1" height="1" fill="#B8B8C0"/><rect x="1246" y="94" width="1" height="1" fill="#B8B8C0"/><rect x="1250" y="94" width="1" height="1" fill="#B8B8C0"/><rect x="1254" y="94" width="1" height="1" fill="#B8B8C0"/><rect x="1258" y="94" width="1" height="1" fill="#B8B8C0"/><rect x="984" y="96" width="1" height="1" fill="#B8B8C0"/><rect x="988" y="96" width="1" height="1" fill="#B8B8C0"/><rect x="992" y="96" width="1" height="1" fill="#B8B8C0"/><rect x="996" y="96" width="1" height="1" fill="#B8B8C0"/><rect x="1000" y="96" width="1" height="1" fill="#B8B8C0"/><rect x="1004" y="96" width="1" height="1" fill="#B8B8C0"/><rect x="1008" y="96" width="1" height="1" fill="#B8B8C0"/><rect x="1012" y="96" width="1" height="1" fill="#B8B8C0"/><rect x="1016" y="96" width="1" height="1" fill="#B8B8C0"/><rect x="1020" y="96" width="1" height="1" fill="#B8B8C0"/><rect x="1024" y="96" width="1" height="1" fill="#B8B8C0"/><rect x="1028" y="96" width="1" height="1" fill="#B8B8C0"/><rect x="1032" y="96" width="1" height="1" fill="#B8B8C0"/><rect x="1036" y="96" width="1" height="1" fill="#B8B8C0"/><rect x="1040" y="96" width="1" height="1" fill="#B8B8C0"/><rect x="1044" y="96" width="1" height="1" fill="#B8B8C0"/><rect x="1048" y="96" width="1" height="1" fill="#B8B8C0"/><rect x="1052" y="96" width="1" height="1" fill="#B8B8C0"/><rect x="1056" y="96" width="1" height="1" fill="#B8B8C0"/><rect x="1060" y="96" width="1" height="1" fill="#B8B8C0"/><rect x="1064" y="96" width="1" height="1" fill="#B8B8C0"/><rect x="1068" y="96" width="1" height="1" fill="#B8B8C0"/><rect x="1072" y="96" width="1" height="1" fill="#B8B8C0"/><rect x="1076" y="96" width="1" height="1" fill="#B8B8C0"/><rect x="1080" y="96" width="1" height="1" fill="#B8B8C0"/><rect x="1084" y="96" width="1" height="1" fill="#B8B8C0"/><rect x="1088" y="96" width="1" height="1" fill="#B8B8C0"/><rect x="1092" y="96" width="1" height="1" fill="#B8B8C0"/><rect x="1096" y="96" width="1" height="1" fill="#B8B8C0"/><rect x="1100" y="96" width="1" height="1" fill="#B8B8C0"/><rect x="1104" y="96" width="1" height="1" fill="#B8B8C0"/><rect x="1108" y="96" width="1" height="1" fill="#B8B8C0"/><rect x="1112" y="96" width="1" height="1" fill="#B8B8C0"/><rect x="1116" y="96" width="1" height="1" fill="#B8B8C0"/><rect x="1120" y="96" width="1" height="1" fill="#B8B8C0"/><rect x="1124" y="96" width="1" height="1" fill="#B8B8C0"/><rect x="1128" y="96" width="1" height="1" fill="#B8B8C0"/><rect x="1132" y="96" width="1" height="1" fill="#B8B8C0"/><rect x="1136" y="96" width="1" height="1" fill="#B8B8C0"/><rect x="1140" y="96" width="1" height="1" fill="#B8B8C0"/><rect x="1144" y="96" width="1" height="1" fill="#B8B8C0"/><rect x="1148" y="96" width="1" height="1" fill="#B8B8C0"/><rect x="1152" y="96" width="1" height="1" fill="#B8B8C0"/><rect x="1156" y="96" width="1" height="1" fill="#B8B8C0"/><rect x="1160" y="96" width="1" height="1" fill="#B8B8C0"/><rect x="1164" y="96" width="1" height="1" fill="#B8B8C0"/><rect x="1168" y="96" width="1" height="1" fill="#B8B8C0"/><rect x="1172" y="96" width="1" height="1" fill="#B8B8C0"/><rect x="1176" y="96" width="1" height="1" fill="#B8B8C0"/><rect x="1180" y="96" width="1" height="1" fill="#B8B8C0"/><rect x="1184" y="96" width="1" height="1" fill="#B8B8C0"/><rect x="1188" y="96" width="1" height="1" fill="#B8B8C0"/><rect x="1192" y="96" width="1" height="1" fill="#B8B8C0"/><rect x="1196" y="96" width="1" height="1" fill="#B8B8C0"/><rect x="1200" y="96" width="1" height="1" fill="#B8B8C0"/><rect x="1204" y="96" width="1" height="1" fill="#B8B8C0"/><rect x="1208" y="96" width="1" height="1" fill="#B8B8C0"/><rect x="1212" y="96" width="1" height="1" fill="#B8B8C0"/><rect x="1216" y="96" width="1" height="1" fill="#B8B8C0"/><rect x="1220" y="96" width="1" height="1" fill="#B8B8C0"/><rect x="1224" y="96" width="1" height="1" fill="#B8B8C0"/><rect x="1228" y="96" width="1" height="1" fill="#B8B8C0"/><rect x="1232" y="96" width="1" height="1" fill="#B8B8C0"/><rect x="1236" y="96" width="1" height="1" fill="#B8B8C0"/><rect x="1240" y="96" width="1" height="1" fill="#B8B8C0"/><rect x="1244" y="96" width="1" height="1" fill="#B8B8C0"/><rect x="1248" y="96" width="1" height="1" fill="#B8B8C0"/><rect x="1252" y="96" width="1" height="1" fill="#B8B8C0"/><rect x="1256" y="96" width="1" height="1" fill="#B8B8C0"/><rect x="967" y="417" width="1" height="1" fill="#B8B8C0"/><rect x="971" y="417" width="1" height="1" fill="#B8B8C0"/><rect x="975" y="417" width="1" height="1" fill="#B8B8C0"/><rect x="979" y="417" width="1" height="1" fill="#B8B8C0"/><rect x="983" y="417" width="1" height="1" fill="#B8B8C0"/><rect x="987" y="417" width="1" height="1" fill="#B8B8C0"/><rect x="991" y="417" width="1" height="1" fill="#B8B8C0"/><rect x="995" y="417" width="1" height="1" fill="#B8B8C0"/><rect x="999" y="417" width="1" height="1" fill="#B8B8C0"/><rect x="1003" y="417" width="1" height="1" fill="#B8B8C0"/><rect x="1007" y="417" width="1" height="1" fill="#B8B8C0"/><rect x="1011" y="417" width="1" height="1" fill="#B8B8C0"/><rect x="1015" y="417" width="1" height="1" fill="#B8B8C0"/><rect x="1019" y="417" width="1" height="1" fill="#B8B8C0"/><rect x="1023" y="417" width="1" height="1" fill="#B8B8C0"/><rect x="1027" y="417" width="1" height="1" fill="#B8B8C0"/><rect x="1031" y="417" width="1" height="1" fill="#B8B8C0"/><rect x="1035" y="417" width="1" height="1" fill="#B8B8C0"/><rect x="1039" y="417" width="1" height="1" fill="#B8B8C0"/><rect x="1043" y="417" width="1" height="1" fill="#B8B8C0"/><rect x="1047" y="417" width="1" height="1" fill="#B8B8C0"/><rect x="1051" y="417" width="1" height="1" fill="#B8B8C0"/><rect x="1055" y="417" width="1" height="1" fill="#B8B8C0"/><rect x="1059" y="417" width="1" height="1" fill="#B8B8C0"/><rect x="1063" y="417" width="1" height="1" fill="#B8B8C0"/><rect x="1067" y="417" width="1" height="1" fill="#B8B8C0"/><rect x="1071" y="417" width="1" height="1" fill="#B8B8C0"/><rect x="1075" y="417" width="1" height="1" fill="#B8B8C0"/><rect x="1079" y="417" width="1" height="1" fill="#B8B8C0"/><rect x="1083" y="417" width="1" height="1" fill="#B8B8C0"/><rect x="1087" y="417" width="1" height="1" fill="#B8B8C0"/><rect x="1091" y="417" width="1" height="1" fill="#B8B8C0"/><rect x="1095" y="417" width="1" height="1" fill="#B8B8C0"/><rect x="1099" y="417" width="1" height="1" fill="#B8B8C0"/><rect x="1103" y="417" width="1" height="1" fill="#B8B8C0"/><rect x="1107" y="417" width="1" height="1" fill="#B8B8C0"/><rect x="1111" y="417" width="1" height="1" fill="#B8B8C0"/><rect x="1115" y="417" width="1" height="1" fill="#B8B8C0"/><rect x="1119" y="417" width="1" height="1" fill="#B8B8C0"/><rect x="1123" y="417" width="1" height="1" fill="#B8B8C0"/><rect x="1127" y="417" width="1" height="1" fill="#B8B8C0"/><rect x="1131" y="417" width="1" height="1" fill="#B8B8C0"/><rect x="1135" y="417" width="1" height="1" fill="#B8B8C0"/><rect x="1139" y="417" width="1" height="1" fill="#B8B8C0"/><rect x="1143" y="417" width="1" height="1" fill="#B8B8C0"/><rect x="1147" y="417" width="1" height="1" fill="#B8B8C0"/><rect x="1151" y="417" width="1" height="1" fill="#B8B8C0"/><rect x="1155" y="417" width="1" height="1" fill="#B8B8C0"/><rect x="1159" y="417" width="1" height="1" fill="#B8B8C0"/><rect x="1163" y="417" width="1" height="1" fill="#B8B8C0"/><rect x="1167" y="417" width="1" height="1" fill="#B8B8C0"/><rect x="1171" y="417" width="1" height="1" fill="#B8B8C0"/><rect x="1175" y="417" width="1" height="1" fill="#B8B8C0"/><rect x="1179" y="417" width="1" height="1" fill="#B8B8C0"/><rect x="1183" y="417" width="1" height="1" fill="#B8B8C0"/><rect x="1187" y="417" width="1" height="1" fill="#B8B8C0"/><rect x="1191" y="417" width="1" height="1" fill="#B8B8C0"/><rect x="1195" y="417" width="1" height="1" fill="#B8B8C0"/><rect x="1199" y="417" width="1" height="1" fill="#B8B8C0"/><rect x="1203" y="417" width="1" height="1" fill="#B8B8C0"/><rect x="1207" y="417" width="1" height="1" fill="#B8B8C0"/><rect x="1211" y="417" width="1" height="1" fill="#B8B8C0"/><rect x="1215" y="417" width="1" height="1" fill="#B8B8C0"/><rect x="1219" y="417" width="1" height="1" fill="#B8B8C0"/><rect x="1223" y="417" width="1" height="1" fill="#B8B8C0"/><rect x="1227" y="417" width="1" height="1" fill="#B8B8C0"/><rect x="1231" y="417" width="1" height="1" fill="#B8B8C0"/><rect x="1235" y="417" width="1" height="1" fill="#B8B8C0"/><rect x="1239" y="417" width="1" height="1" fill="#B8B8C0"/><rect x="1243" y="417" width="1" height="1" fill="#B8B8C0"/><rect x="1247" y="417" width="1" height="1" fill="#B8B8C0"/><rect x="1251" y="417" width="1" height="1" fill="#B8B8C0"/><rect x="1255" y="417" width="1" height="1" fill="#B8B8C0"/><rect x="1259" y="417" width="1" height="1" fill="#B8B8C0"/><rect x="969" y="419" width="1" height="1" fill="#B8B8C0"/><rect x="973" y="419" width="1" height="1" fill="#B8B8C0"/><rect x="977" y="419" width="1" height="1" fill="#B8B8C0"/><rect x="981" y="419" width="1" height="1" fill="#B8B8C0"/><rect x="985" y="419" width="1" height="1" fill="#B8B8C0"/><rect x="989" y="419" width="1" height="1" fill="#B8B8C0"/><rect x="993" y="419" width="1" height="1" fill="#B8B8C0"/><rect x="997" y="419" width="1" height="1" fill="#B8B8C0"/><rect x="1001" y="419" width="1" height="1" fill="#B8B8C0"/><rect x="1005" y="419" width="1" height="1" fill="#B8B8C0"/><rect x="1009" y="419" width="1" height="1" fill="#B8B8C0"/><rect x="1013" y="419" width="1" height="1" fill="#B8B8C0"/><rect x="1017" y="419" width="1" height="1" fill="#B8B8C0"/><rect x="1021" y="419" width="1" height="1" fill="#B8B8C0"/><rect x="1025" y="419" width="1" height="1" fill="#B8B8C0"/><rect x="1029" y="419" width="1" height="1" fill="#B8B8C0"/><rect x="1033" y="419" width="1" height="1" fill="#B8B8C0"/><rect x="1037" y="419" width="1" height="1" fill="#B8B8C0"/><rect x="1041" y="419" width="1" height="1" fill="#B8B8C0"/><rect x="1045" y="419" width="1" height="1" fill="#B8B8C0"/><rect x="1049" y="419" width="1" height="1" fill="#B8B8C0"/><rect x="1053" y="419" width="1" height="1" fill="#B8B8C0"/><rect x="1057" y="419" width="1" height="1" fill="#B8B8C0"/><rect x="1061" y="419" width="1" height="1" fill="#B8B8C0"/><rect x="1065" y="419" width="1" height="1" fill="#B8B8C0"/><rect x="1069" y="419" width="1" height="1" fill="#B8B8C0"/><rect x="1073" y="419" width="1" height="1" fill="#B8B8C0"/><rect x="1077" y="419" width="1" height="1" fill="#B8B8C0"/><rect x="1081" y="419" width="1" height="1" fill="#B8B8C0"/><rect x="1085" y="419" width="1" height="1" fill="#B8B8C0"/><rect x="1089" y="419" width="1" height="1" fill="#B8B8C0"/><rect x="1093" y="419" width="1" height="1" fill="#B8B8C0"/><rect x="1097" y="419" width="1" height="1" fill="#B8B8C0"/><rect x="1101" y="419" width="1" height="1" fill="#B8B8C0"/><rect x="1105" y="419" width="1" height="1" fill="#B8B8C0"/><rect x="1109" y="419" width="1" height="1" fill="#B8B8C0"/><rect x="1113" y="419" width="1" height="1" fill="#B8B8C0"/><rect x="1117" y="419" width="1" height="1" fill="#B8B8C0"/><rect x="1121" y="419" width="1" height="1" fill="#B8B8C0"/><rect x="1125" y="419" width="1" height="1" fill="#B8B8C0"/><rect x="1129" y="419" width="1" height="1" fill="#B8B8C0"/><rect x="1133" y="419" width="1" height="1" fill="#B8B8C0"/><rect x="1137" y="419" width="1" height="1" fill="#B8B8C0"/><rect x="1141" y="419" width="1" height="1" fill="#B8B8C0"/><rect x="1145" y="419" width="1" height="1" fill="#B8B8C0"/><rect x="1149" y="419" width="1" height="1" fill="#B8B8C0"/><rect x="1153" y="419" width="1" height="1" fill="#B8B8C0"/><rect x="1157" y="419" width="1" height="1" fill="#B8B8C0"/><rect x="1161" y="419" width="1" height="1" fill="#B8B8C0"/><rect x="1165" y="419" width="1" height="1" fill="#B8B8C0"/><rect x="1169" y="419" width="1" height="1" fill="#B8B8C0"/><rect x="1173" y="419" width="1" height="1" fill="#B8B8C0"/><rect x="1177" y="419" width="1" height="1" fill="#B8B8C0"/><rect x="1181" y="419" width="1" height="1" fill="#B8B8C0"/><rect x="1185" y="419" width="1" height="1" fill="#B8B8C0"/><rect x="1189" y="419" width="1" height="1" fill="#B8B8C0"/><rect x="1193" y="419" width="1" height="1" fill="#B8B8C0"/><rect x="1197" y="419" width="1" height="1" fill="#B8B8C0"/><rect x="1201" y="419" width="1" height="1" fill="#B8B8C0"/><rect x="1205" y="419" width="1" height="1" fill="#B8B8C0"/><rect x="1209" y="419" width="1" height="1" fill="#B8B8C0"/><rect x="1213" y="419" width="1" height="1" fill="#B8B8C0"/><rect x="1217" y="419" width="1" height="1" fill="#B8B8C0"/><rect x="1221" y="419" width="1" height="1" fill="#B8B8C0"/><rect x="1225" y="419" width="1" height="1" fill="#B8B8C0"/><rect x="1229" y="419" width="1" height="1" fill="#B8B8C0"/><rect x="1233" y="419" width="1" height="1" fill="#B8B8C0"/><rect x="1237" y="419" width="1" height="1" fill="#B8B8C0"/><rect x="1241" y="419" width="1" height="1" fill="#B8B8C0"/><rect x="1245" y="419" width="1" height="1" fill="#B8B8C0"/><rect x="1249" y="419" width="1" height="1" fill="#B8B8C0"/><rect x="1253" y="419" width="1" height="1" fill="#B8B8C0"/><rect x="1257" y="419" width="1" height="1" fill="#B8B8C0"/><rect x="967" y="421" width="1" height="1" fill="#B8B8C0"/><rect x="971" y="421" width="1" height="1" fill="#B8B8C0"/><rect x="975" y="421" width="1" height="1" fill="#B8B8C0"/><rect x="979" y="421" width="1" height="1" fill="#B8B8C0"/><rect x="983" y="421" width="1" height="1" fill="#B8B8C0"/><rect x="987" y="421" width="1" height="1" fill="#B8B8C0"/><rect x="991" y="421" width="1" height="1" fill="#B8B8C0"/><rect x="995" y="421" width="1" height="1" fill="#B8B8C0"/><rect x="999" y="421" width="1" height="1" fill="#B8B8C0"/><rect x="1003" y="421" width="1" height="1" fill="#B8B8C0"/><rect x="1007" y="421" width="1" height="1" fill="#B8B8C0"/><rect x="1011" y="421" width="1" height="1" fill="#B8B8C0"/><rect x="1015" y="421" width="1" height="1" fill="#B8B8C0"/><rect x="1019" y="421" width="1" height="1" fill="#B8B8C0"/><rect x="1023" y="421" width="1" height="1" fill="#B8B8C0"/><rect x="1027" y="421" width="1" height="1" fill="#B8B8C0"/><rect x="1031" y="421" width="1" height="1" fill="#B8B8C0"/><rect x="1035" y="421" width="1" height="1" fill="#B8B8C0"/><rect x="1039" y="421" width="1" height="1" fill="#B8B8C0"/><rect x="1043" y="421" width="1" height="1" fill="#B8B8C0"/><rect x="1047" y="421" width="1" height="1" fill="#B8B8C0"/><rect x="1051" y="421" width="1" height="1" fill="#B8B8C0"/><rect x="1055" y="421" width="1" height="1" fill="#B8B8C0"/><rect x="1059" y="421" width="1" height="1" fill="#B8B8C0"/><rect x="1063" y="421" width="1" height="1" fill="#B8B8C0"/><rect x="1067" y="421" width="1" height="1" fill="#B8B8C0"/><rect x="1071" y="421" width="1" height="1" fill="#B8B8C0"/><rect x="1075" y="421" width="1" height="1" fill="#B8B8C0"/><rect x="1079" y="421" width="1" height="1" fill="#B8B8C0"/><rect x="1083" y="421" width="1" height="1" fill="#B8B8C0"/><rect x="1087" y="421" width="1" height="1" fill="#B8B8C0"/><rect x="1091" y="421" width="1" height="1" fill="#B8B8C0"/><rect x="1095" y="421" width="1" height="1" fill="#B8B8C0"/><rect x="1099" y="421" width="1" height="1" fill="#B8B8C0"/><rect x="1103" y="421" width="1" height="1" fill="#B8B8C0"/><rect x="1107" y="421" width="1" height="1" fill="#B8B8C0"/><rect x="1111" y="421" width="1" height="1" fill="#B8B8C0"/><rect x="1115" y="421" width="1" height="1" fill="#B8B8C0"/><rect x="1119" y="421" width="1" height="1" fill="#B8B8C0"/><rect x="1123" y="421" width="1" height="1" fill="#B8B8C0"/><rect x="1127" y="421" width="1" height="1" fill="#B8B8C0"/><rect x="1131" y="421" width="1" height="1" fill="#B8B8C0"/><rect x="1135" y="421" width="1" height="1" fill="#B8B8C0"/><rect x="1139" y="421" width="1" height="1" fill="#B8B8C0"/><rect x="1143" y="421" width="1" height="1" fill="#B8B8C0"/><rect x="1147" y="421" width="1" height="1" fill="#B8B8C0"/><rect x="1151" y="421" width="1" height="1" fill="#B8B8C0"/><rect x="1155" y="421" width="1" height="1" fill="#B8B8C0"/><rect x="1159" y="421" width="1" height="1" fill="#B8B8C0"/><rect x="1163" y="421" width="1" height="1" fill="#B8B8C0"/><rect x="1167" y="421" width="1" height="1" fill="#B8B8C0"/><rect x="1171" y="421" width="1" height="1" fill="#B8B8C0"/><rect x="1175" y="421" width="1" height="1" fill="#B8B8C0"/><rect x="1179" y="421" width="1" height="1" fill="#B8B8C0"/><rect x="1183" y="421" width="1" height="1" fill="#B8B8C0"/><rect x="1187" y="421" width="1" height="1" fill="#B8B8C0"/><rect x="1191" y="421" width="1" height="1" fill="#B8B8C0"/><rect x="1195" y="421" width="1" height="1" fill="#B8B8C0"/><rect x="1199" y="421" width="1" height="1" fill="#B8B8C0"/><rect x="1203" y="421" width="1" height="1" fill="#B8B8C0"/><rect x="1207" y="421" width="1" height="1" fill="#B8B8C0"/><rect x="1211" y="421" width="1" height="1" fill="#B8B8C0"/><rect x="1215" y="421" width="1" height="1" fill="#B8B8C0"/><rect x="1219" y="421" width="1" height="1" fill="#B8B8C0"/><rect x="1223" y="421" width="1" height="1" fill="#B8B8C0"/><rect x="1227" y="421" width="1" height="1" fill="#B8B8C0"/><rect x="1231" y="421" width="1" height="1" fill="#B8B8C0"/><rect x="1235" y="421" width="1" height="1" fill="#B8B8C0"/><rect x="1239" y="421" width="1" height="1" fill="#B8B8C0"/><rect x="1243" y="421" width="1" height="1" fill="#B8B8C0"/><rect x="1247" y="421" width="1" height="1" fill="#B8B8C0"/><rect x="1251" y="421" width="1" height="1" fill="#B8B8C0"/><rect x="1255" y="421" width="1" height="1" fill="#B8B8C0"/><rect x="1259" y="421" width="1" height="1" fill="#B8B8C0"/></svg>
<svg class="a" style="left:1262px;top:89px" width="30" height="10">
<path d="M4.5 0.5 L8.5 0.5 L8.5 5.5 L4.5 5.5 Z" fill="none" stroke="#1E1E1E"/><rect x="7" y="0" width="2" height="6" fill="#1E1E1E"/><rect x="3" y="5" width="7" height="1.2" fill="#1E1E1E"/><rect x="6" y="6" width="1" height="4" fill="#1E1E1E"/>
<path d="M18.5 1.5 L25.5 8.5 M25.5 1.5 L18.5 8.5" stroke="#1E1E1E" stroke-width="1.5"/>
</svg>
<svg class="a" style="left:1262px;top:414px" width="30" height="10">
<path d="M4.5 0.5 L8.5 0.5 L8.5 5.5 L4.5 5.5 Z" fill="none" stroke="#1E1E1E"/><rect x="7" y="0" width="2" height="6" fill="#1E1E1E"/><rect x="3" y="5" width="7" height="1.2" fill="#1E1E1E"/><rect x="6" y="6" width="1" height="4" fill="#1E1E1E"/>
<path d="M18.5 1.5 L25.5 8.5 M25.5 1.5 L18.5 8.5" stroke="#1E1E1E" stroke-width="1.5"/>
</svg>
<svg class="a" style="left:908px;top:111px" width="16" height="16"><rect width="16" height="16" fill="#2F5575"/>
<path d="M4.5 12 L4.5 7.5 L10.5 7.5" fill="none" stroke="#fff" stroke-width="1.2"/><path d="M9 5 L12 7.5 L9 10 Z" fill="#fff"/></svg>
<div class="a" style="left:931px;top:108px;width:1px;height:24px;background:#CCCEDB;"></div>
<div class="t" style="left:938px;top:112px;">Filter:</div>
<div class="a" style="left:970px;top:109px;width:327px;height:20px;background:#F0F0F0;border:1px solid #707070"></div>
<div class="a" style="left:1032px;top:316px;width:250px;height:25px;background:#F0F0F3;"></div>
<svg class="a" style="left:0;top:0" width="1300" height="751"><clipPath id="tc"><rect x="900" y="135" width="382" height="270"/></clipPath><g clip-path="url(#tc)"><rect x="910.5" y="143.5" width="8" height="8" fill="#fff" stroke="#A0A0A0"/><rect x="912" y="147" width="5" height="1" fill="#000"/><path d="M931.5 156 L944 144.5" stroke="#34566F" stroke-width="6" stroke-linecap="round"/><circle cx="947.5" cy="141.5" r="7" fill="#34566F"/><g transform="rotate(45 949.3 138.7)"><rect x="947" y="126" width="4.6" height="12.7" fill="#EEEEF2"/><circle cx="949.3" cy="138.7" r="2.3" fill="#EEEEF2"/></g><rect x="936.5" y="169.5" width="8" height="8" fill="#fff" stroke="#A0A0A0"/><rect x="938" y="173" width="5" height="1" fill="#000"/><rect x="940" y="171" width="1" height="5" fill="#000"/><rect x="956" y="163" width="11" height="4" fill="#6C8CAB"/><rect x="956" y="166" width="24" height="2" fill="#8E9FAF"/><rect x="956" y="168" width="24" height="15" fill="#34566F"/><rect x="936.5" y="195.5" width="8" height="8" fill="#fff" stroke="#A0A0A0"/><rect x="938" y="199" width="5" height="1" fill="#000"/><rect x="956" y="189" width="11" height="4" fill="#6C8CAB"/><rect x="956" y="192" width="24" height="2" fill="#8E9FAF"/><rect x="956" y="194" width="24" height="15" fill="#34566F"/><rect x="962.5" y="221.5" width="8" height="8" fill="#fff" stroke="#A0A0A0"/><rect x="964" y="225" width="5" height="1" fill="#000"/><rect x="982" y="215" width="11" height="4" fill="#6C8CAB"/><rect x="982" y="218" width="24" height="2" fill="#8E9FAF"/><rect x="982" y="220" width="24" height="15" fill="#34566F"/><rect x="1008" y="241" width="24" height="5" fill="#7E92A3"/><rect x="1008" y="246" width="24" height="15" fill="#34566F"/><rect x="1011" y="248" width="7" height="1" fill="#fff"/><rect x="1020" y="248" width="9" height="3" fill="#fff"/><rect x="962.5" y="273.5" width="8" height="8" fill="#fff" stroke="#A0A0A0"/><rect x="964" y="277" width="5" height="1" fill="#000"/><rect x="982" y="267" width="11" height="4" fill="#6C8CAB"/><rect x="982" y="270" width="24" height="2" fill="#8E9FAF"/><rect x="982" y="272" width="24" height="15" fill="#34566F"/><rect x="1008" y="293" width="24" height="5" fill="#7E92A3"/><rect x="1008" y="298" width="24" height="15" fill="#34566F"/><rect x="1011" y="300" width="7" height="1" fill="#fff"/><rect x="1020" y="300" width="9" height="3" fill="#fff"/><rect x="1008" y="319" width="24" height="5" fill="#7E92A3"/><rect x="1008" y="324" width="24" height="15" fill="#34566F"/><rect x="1011" y="326" width="7" height="1" fill="#fff"/><rect x="1020" y="326" width="9" height="3" fill="#fff"/><rect x="962.5" y="351.5" width="8" height="8" fill="#fff" stroke="#A0A0A0"/><rect x="964" y="355" width="5" height="1" fill="#000"/><rect x="966" y="353" width="1" height="5" fill="#000"/><rect x="982" y="345" width="11" height="4" fill="#6C8CAB"/><rect x="982" y="348" width="24" height="2" fill="#8E9FAF"/><rect x="982" y="350" width="24" height="15" fill="#34566F"/><rect x="962.5" y="377.5" width="8" height="8" fill="#fff" stroke="#A0A0A0"/><rect x="964" y="381" width="5" height="1" fill="#000"/><rect x="966" y="379" width="1" height="5" fill="#000"/><rect x="982" y="371" width="11" height="4" fill="#6C8CAB"/><rect x="982" y="374" width="24" height="2" fill="#8E9FAF"/><rect x="982" y="376" width="24" height="15" fill="#34566F"/><rect x="962.5" y="403.5" width="8" height="8" fill="#fff" stroke="#A0A0A0"/><rect x="964" y="407" width="5" height="1" fill="#000"/><rect x="966" y="405" width="1" height="5" fill="#000"/><rect x="982" y="397" width="11" height="4" fill="#6C8CAB"/><rect x="982" y="400" width="24" height="2" fill="#8E9FAF"/><rect x="982" y="402" width="24" height="15" fill="#34566F"/></g><rect x="1282" y="135" width="17" height="270" fill="#F0F0F0"/><rect x="1282" y="135" width="1" height="270" fill="#FFFFFF"/><rect x="1283" y="151" width="16" height="206" fill="#CDCDCD"/><path d="M1287.3 145.8 L1290.5 142 L1293.7 145.8" fill="none" stroke="#555" stroke-width="2"/><path d="M1287 394.5 L1290.5 398 L1294 394.5" fill="none" stroke="#555" stroke-width="2"/></svg>
<div class="a" style="left:900px;top:135px;width:382px;height:270px;overflow:hidden">
<div class="tr" style="left:59px;top:6px;letter-spacing:-0.03px">SUPPORT</div>
<div class="tr" style="left:86px;top:32px;letter-spacing:0.65px">1.Users</div>
<div class="tr" style="left:86px;top:58px;letter-spacing:1.15px">2.Objects</div>
<div class="tr" style="left:127px;top:84px;letter-spacing:1.31px">1000 Ticket</div>
<div class="tr" style="left:153px;top:110px;letter-spacing:1.22px">1001 Tickets (base)</div>
<div class="tr" style="left:127px;top:136px;letter-spacing:1.42px">1100 Status</div>
<div class="tr" style="left:153px;top:162px;letter-spacing:1.47px">1101 Status type</div>
<div class="tr" style="left:153px;top:188px;letter-spacing:1.31px">1102 Status (base)</div>
<div class="tr" style="left:127px;top:214px;letter-spacing:1.05px">1200 Comment</div>
<div class="tr" style="left:127px;top:240px;letter-spacing:1.04px">1300 Customer</div>
<div class="tr" style="left:127px;top:266px;letter-spacing:1.1px">1400 Users</div>
</div>
<div class="a" style="left:903px;top:405px;width:394px;height:4px;background:#CCCEDB;"></div>
<div class="t" style="left:908px;top:412px;letter-spacing:-0.1px">Properties</div>
<svg class="a" style="left:900px;top:428px" width="260" height="32">
<rect x="3.5" y="3.5" width="25" height="25" fill="none" stroke="#3399FF"/>
<rect x="6" y="6" width="8" height="8" fill="#2F5575"/><rect x="6" y="17" width="8" height="8" fill="#2F5575"/>
<rect x="9.5" y="14" width="1" height="3" fill="#2F5575"/>
<rect x="8" y="9.5" width="4" height="1" fill="#3BA776"/><rect x="9.5" y="8" width="1" height="4" fill="#3BA776"/>
<rect x="8" y="20.5" width="4" height="1" fill="#1BA1E2"/><rect x="9.5" y="19" width="1" height="4" fill="#1BA1E2"/>
<rect x="16" y="7" width="9" height="1.3" fill="#3BA776"/><rect x="16" y="9.5" width="7" height="1.3" fill="#9DBFAE"/><rect x="16" y="12" width="7" height="1.3" fill="#3BA776"/>
<rect x="16" y="18" width="9" height="1.3" fill="#1BA1E2"/><rect x="16" y="20.5" width="7" height="1.3" fill="#9CC1D6"/><rect x="16" y="23" width="7" height="1.3" fill="#1BA1E2"/>
<rect x="31" y="5" width="1" height="24" fill="#CCCEDB"/>
<rect x="38" y="7.5" width="19" height="1.5" fill="#2F5575"/>
<g fill="#7FAE95"><rect x="38" y="11" width="8" height="1.3"/><rect x="49" y="11" width="8" height="1.3"/><rect x="38" y="13.5" width="8" height="1.3"/><rect x="49" y="13.5" width="8" height="1.3"/><rect x="38" y="16" width="8" height="1.3"/><rect x="49" y="16" width="8" height="1.3"/></g>
<g fill="#4FA7D5"><rect x="38" y="19" width="8" height="1.3"/><rect x="49" y="19" width="8" height="1.3"/><rect x="38" y="22" width="8" height="1.3"/><rect x="49" y="22" width="8" height="1.3"/></g>
<rect x="64" y="5" width="1" height="24" fill="#CCCEDB"/>
<text x="71" y="16.5" font-family="Liberation Sans" font-weight="bold" font-size="10.5" fill="#3BA776">A</text>
<text x="71.5" y="26" font-family="Liberation Sans" font-weight="bold" font-size="10.5" fill="#E04A3C">Z</text>
<rect x="84" y="7" width="1.6" height="2" fill="#2F5575"/><rect x="84" y="10.5" width="1.6" height="14" fill="#2F5575"/>
<path d="M80.5 20 L84.8 24.5 L89 20" fill="none" stroke="#2F5575" stroke-width="1.8"/>
<rect x="95" y="5" width="1" height="24" fill="#CCCEDB"/>
<rect x="99.5" y="5.5" width="149" height="21" fill="none" stroke="#C4C4C4"/>
<path d="M238 15 L245 15 L241.5 18.5 Z" fill="#BBBBBB"/>
</svg>
<svg class="a" style="left:0;top:0" width="1300" height="751"><rect x="904.5" y="465.5" width="8" height="8" fill="none" stroke="#1E1E1E"/><rect x="906" y="469" width="5" height="1" fill="#1E1E1E"/><rect x="908" y="467" width="1" height="5" fill="#1E1E1E"/><rect x="904.5" y="484.5" width="8" height="8" fill="none" stroke="#1E1E1E"/><rect x="906" y="488" width="5" height="1" fill="#1E1E1E"/><rect x="916" y="498" width="185" height="18" fill="#F5F5F5"/><rect x="1102" y="498" width="180" height="18" fill="#F5F5F5"/><rect x="916" y="517" width="185" height="18" fill="#F5F5F5"/><rect x="1102" y="517" width="180" height="18" fill="#F5F5F5"/><rect x="904.5" y="541.5" width="8" height="8" fill="none" stroke="#1E1E1E"/><rect x="906" y="545" width="5" height="1" fill="#1E1E1E"/><rect x="916" y="555" width="185" height="18" fill="#F5F5F5"/><rect x="1102" y="555" width="180" height="18" fill="#F5F5F5"/><rect x="916" y="574" width="185" height="18" fill="#F5F5F5"/><rect x="1102" y="574" width="180" height="18" fill="#F5F5F5"/><rect x="916" y="593" width="185" height="18" fill="#F5F5F5"/><rect x="1102" y="593" width="180" height="18" fill="#F5F5F5"/><rect x="916" y="612" width="185" height="18" fill="#F5F5F5"/><rect x="1102" y="612" width="180" height="18" fill="#F5F5F5"/><rect x="916" y="631" width="185" height="18" fill="#F5F5F5"/><rect x="1102" y="631" width="180" height="18" fill="#F5F5F5"/><rect x="904.5" y="655.5" width="8" height="8" fill="none" stroke="#1E1E1E"/><rect x="906" y="659" width="5" height="1" fill="#1E1E1E"/><rect x="1247.5" y="517.5" width="16" height="18" fill="#FFFFFF" stroke="#D5D9E3"/><rect x="1251" y="529" width="2" height="2" fill="#000"/><rect x="1255" y="529" width="2" height="2" fill="#000"/><rect x="1259" y="529" width="2" height="2" fill="#000"/><rect x="1264" y="517" width="18" height="18" fill="#FFFFFF"/><path d="M1268 523.5 L1277 523.5 L1272.5 528 Z" fill="#666"/><rect x="1282" y="460" width="15" height="209" fill="#F0F0F0"/><rect x="1282" y="460" width="1" height="209" fill="#FFFFFF"/><rect x="1283" y="477" width="14" height="92" fill="#CDCDCD"/><path d="M1286.5 471 L1289.5 468 L1292.5 471" fill="none" stroke="#555" stroke-width="2"/><path d="M1286.5 658 L1289.5 661 L1292.5 658" fill="none" stroke="#555" stroke-width="2"/><rect x="901" y="669" width="397" height="3" fill="#F2F2F4"/><rect x="901" y="672" width="397" height="58" fill="#F7F7F7"/></svg>
<div class="t" style="left:919px;top:462px;font-weight:bold;letter-spacing:-0.2px">Object</div>
<div class="t" style="left:919px;top:481px;font-weight:bold;letter-spacing:-0.2px">Format</div>
<div class="t" style="left:919px;top:500px;letter-spacing:-0.15px">External Connection</div>
<div class="t" style="left:919px;top:519px;letter-spacing:-0.15px">Data Source</div>
<div class="t" style="left:1105px;top:519px;letter-spacing:-0.15px">t_statuses</div>
<div class="t" style="left:919px;top:538px;font-weight:bold;letter-spacing:-0.37px">System Fields</div>
<div class="t" style="left:919px;top:557px;letter-spacing:-0.3px">Record ID</div>
<div class="t" style="left:1105px;top:557px;letter-spacing:-0.15px">idkart</div>
<div class="t" style="left:919px;top:576px;letter-spacing:-0.05px">Date &amp; Time (Created)</div>
<div class="t" style="left:919px;top:595px;letter-spacing:0.03px">Date &amp; Time (Updated)</div>
<div class="t" style="left:919px;top:614px;letter-spacing:-0.05px">Date &amp; Time (Closed)</div>
<div class="t" style="left:919px;top:633px;letter-spacing:-0.5px">User ID</div>
<div class="t" style="left:919px;top:652px;font-weight:bold;letter-spacing:-0.5px">Caching</div>
<div class="t" style="left:908px;top:676px;font-weight:bold;letter-spacing:-0.2px">Data Source</div>
</div></body></html>
